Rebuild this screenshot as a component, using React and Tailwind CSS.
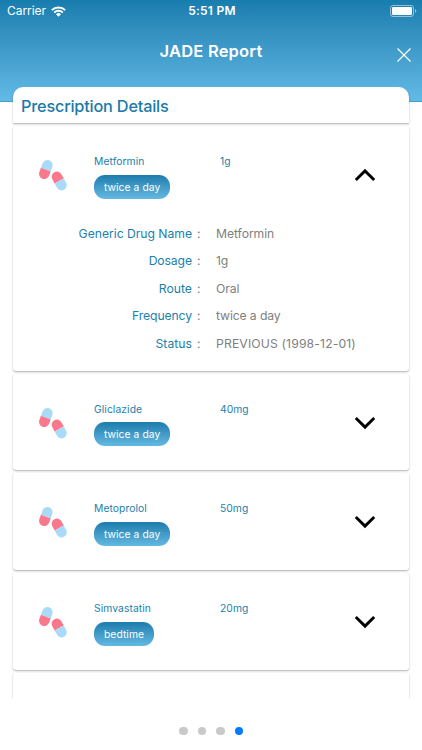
import React from 'react';

const details = [
  ['Generic Drug Name', 'Metformin', 'tracking-[-0.03px]', 'tracking-[-0.07px]'],
  ['Dosage', '1g', 'tracking-[-0.1px]', 'tracking-[-0.1px]'],
  ['Route', 'Oral', 'tracking-[0.02px]', 'tracking-[-0.12px]'],
  ['Frequency', 'twice a day', 'tracking-[-0.1px]', 'tracking-[-0.12px]'],
  ['Status', 'PREVIOUS (1998-12-01)', 'tracking-[0.03px]', 'tracking-[0.14px]'],
];

const others = [
  { name: 'Gliclazide', dose: '40mg', freq: 'twice a day' },
  { name: 'Metoprolol', dose: '50mg', freq: 'twice a day' },
  { name: 'Simvastatin', dose: '20mg', freq: 'bedtime' },
];

function Pills() {
  return (
    <svg className="block h-[32px] w-[30px]" viewBox="0 0 30 32">
      <g transform="translate(7.8 10.6) rotate(20)">
        <path d="M-5.2 0V-4.7a5.2 5.2 0 0 1 10.4 0V0z" fill="#a9dbf8" />
        <path d="M-5.2 0V4.5a5.2 5.2 0 0 0 10.4 0V0z" fill="#f9788c" />
      </g>
      <g transform="translate(21.2 22) rotate(-29)">
        <path d="M-5.2 0V-4.8a5.2 5.2 0 0 1 10.4 0V0z" fill="#f9788c" />
        <path d="M-5.2 0V4.8a5.2 5.2 0 0 0 10.4 0V0z" fill="#a9dbf8" />
      </g>
    </svg>
  );
}

function Chevron({ up }) {
  return (
    <svg className="block h-[14px] w-[22px]" viewBox="0 0 22 14" fill="none" stroke="#000" strokeWidth="2.9">
      <path d={up ? 'M1.8 12 11 2.9 20.2 12' : 'M1.8 2 11 11.1 20.2 2'} />
    </svg>
  );
}

function DrugRow({ name, dose, freq, open }) {
  return (
    <div className="flex h-[96px]">
      <div className="w-[81px] pt-[33px] pl-[25px]">
        <Pills />
      </div>
      <div className="flex w-[126px] flex-col items-start pt-[27px]">
        <div className="h-[16px] text-[10.3px] leading-[16px] tracking-[0.08px] text-[#1b7fae]">{name}</div>
        <div className="mt-[5.5px] h-[24px] rounded-[11px] bg-linear-to-b from-[#1a7cac] to-[#63b9e2] px-[10px] text-[10.3px] leading-[24px] tracking-[0.06px] text-white">
          {freq}
        </div>
      </div>
      <div className="w-[133.5px] pt-[27px] text-[10.3px] leading-[16px] tracking-[0.05px] text-[#1b7fae]">{dose}</div>
      <div className="pt-[42px]">
        <Chevron up={open} />
      </div>
    </div>
  );
}

const cardShadow = 'shadow-[0_1px_2px_rgba(0,0,0,0.32)]';

export default function App() {
  return (
    <div className="flex h-[750px] w-[422px] flex-col overflow-hidden bg-white font-['Inter','Liberation_Sans',sans-serif]">
      <header className="h-[102px] shrink-0 border-b border-[#4a9fca] bg-linear-to-b from-[#177dae] to-[#62bae6] text-white">
        <div className="grid h-[22px] grid-cols-3 items-center pr-[5px] pl-[7px]">
          <div className="flex items-center gap-[5px] text-[12px] tracking-[-0.05px]">
            <span>Carrier</span>
            <svg className="h-[11px] w-[15px]" viewBox="0 0 15 11" fill="none" stroke="white" strokeWidth="2">
              <path d="M.8 4.1a9.6 9.6 0 0 1 13.4 0" />
              <path d="M3.2 6.6a6.2 6.2 0 0 1 8.6 0" />
              <path d="M7.5 10.8 5 8.3a3.6 3.6 0 0 1 5 0z" fill="white" stroke="none" />
            </svg>
          </div>
          <div className="text-center text-[12px] font-semibold tracking-[0.25px]">5:51 PM</div>
          <svg className="-mt-px h-[12px] w-[27px] justify-self-end" viewBox="0 0 27 12">
            <rect x=".5" y=".5" width="23" height="11" rx="2.5" fill="none" stroke="white" strokeOpacity=".5" />
            <rect x="2" y="2" width="20" height="8" rx="1.3" fill="white" />
            <path d="M25 4v4c1.8-.7 1.8-3.3 0-4z" fill="white" fillOpacity=".5" />
          </svg>
        </div>
        <div className="grid h-[65px] grid-cols-[30px_1fr_30px] pt-[17px]">
          <div />
          <h1 className="text-center text-[16.5px] leading-[24px] font-semibold tracking-[0.2px]">JADE Report</h1>
          <svg className="mt-[7.5px] ml-[4px] h-[16px] w-[16px]" viewBox="0 0 16 16" stroke="white" strokeWidth="1.2">
            <path d="m1.5 1.5 13 13M14.5 1.5l-13 13" />
          </svg>
        </div>
      </header>
      <main className="relative -mt-[15px] flex h-[611px] shrink-0 flex-col gap-[3px] overflow-hidden px-[13px]">
        <section className={`h-[36px] w-[396px] shrink-0 rounded-t-[10px] bg-white pl-[8px] ${cardShadow}`}>
          <h2 className="text-[16.3px] leading-[38px] font-medium tracking-[-0.2px] text-[#1b7aa9]">Prescription Details</h2>
        </section>
        <section className={`h-[244.5px] w-[396px] shrink-0 rounded-[3px] bg-white ${cardShadow}`}>
          <DrugRow name="Metformin" dose="1g" freq="twice a day" open />
          <dl className="-mt-[2.5px] text-[12.2px] leading-[27.5px]">
            {details.map(([label, value, lt, vt]) => (
              <div key={label} className="flex h-[27.5px]">
                <dt className={`w-[179px] text-right text-[#1b7fae] ${lt}`}>{label}</dt>
                <span className="w-[24px] pl-[5px] text-[#808080]">:</span>
                <dd className={`text-[#808080] ${vt}`}>{value}</dd>
              </div>
            ))}
          </dl>
        </section>
        {others.map((d) => (
          <section key={d.name} className={`h-[96.9px] w-[396px] shrink-0 rounded-[3px] bg-white ${cardShadow}`}>
            <DrugRow {...d} />
          </section>
        ))}
        <section className={`h-[97px] w-[396px] shrink-0 rounded-[3px] bg-white ${cardShadow}`} />
      </main>
      <nav className="flex grow items-center justify-center pt-[14px]">
        <div className="flex gap-[10px]">
          {[0, 1, 2, 3].map((i) => (
            <span key={i} className={`size-[8.5px] rounded-full ${i === 3 ? 'bg-[#007aff]' : 'bg-[#c9c9c9]'}`} />
          ))}
        </div>
      </nav>
    </div>
  );
}
